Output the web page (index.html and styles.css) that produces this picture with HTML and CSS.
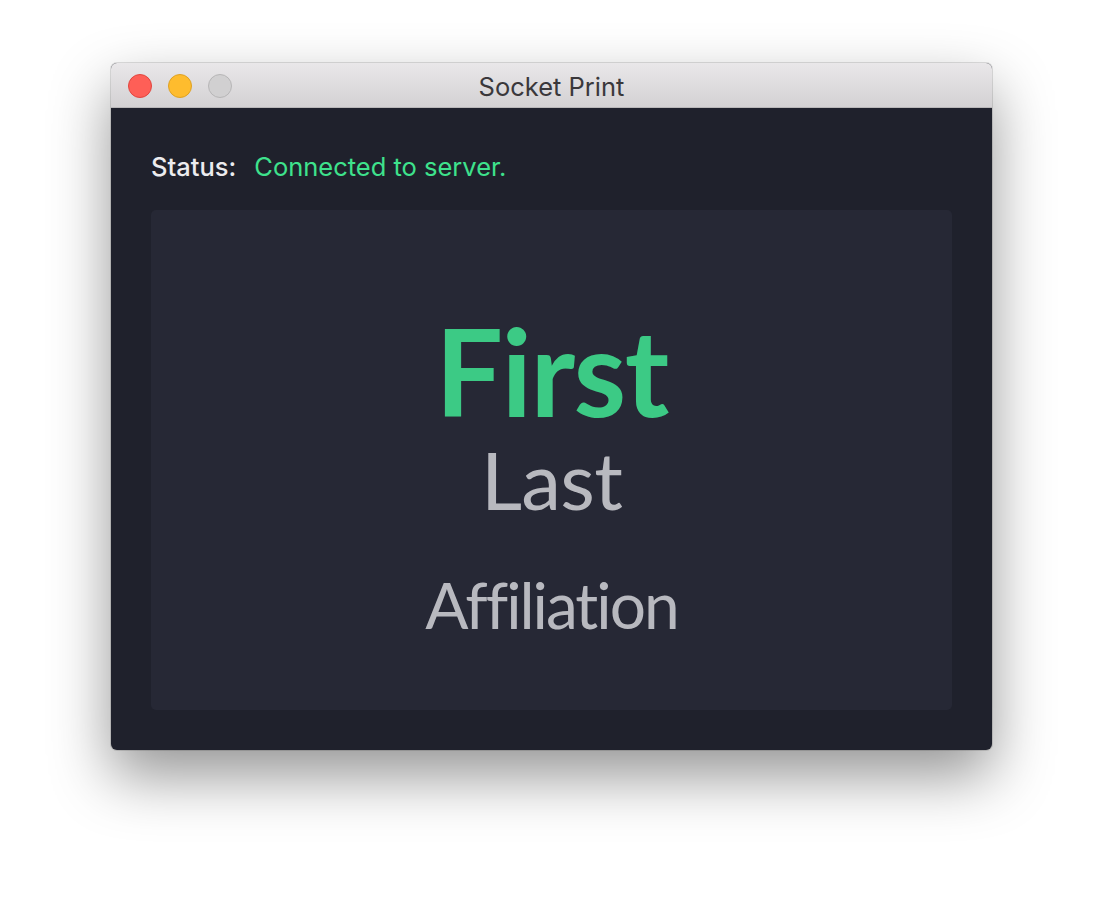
FILE: index.html
```html
<!DOCTYPE html>
<html>
<head>
<meta charset="utf-8">
<link rel="stylesheet" href="styles.css">
</head>
<body>
<div class="stage">
  <div class="window">
    <div class="titlebar">
      <div class="lights">
        <span class="light red"></span>
        <span class="light yellow"></span>
        <span class="light gray"></span>
      </div>
      <div class="title">Socket Print</div>
    </div>
    <div class="content">
      <div class="status">
        <span class="status-label">Status:</span>
        <span class="status-value">Connected to server.</span>
      </div>
      <div class="card">
        <div class="first">First</div>
        <div class="last">Last</div>
        <div class="affiliation">Affiliation</div>
      </div>
    </div>
  </div>
</div>
</body>
</html>
```
FILE: styles.css
```css
html, body {
  margin: 0;
  padding: 0;
  background: #ffffff;
}
.stage {
  padding: 63px 0 0 111px;
  height: 910px;
  box-sizing: border-box;
}
.window {
  width: 881px;
  height: 687px;
  border-radius: 6px;
  overflow: hidden;
  background: #1f212c;
  box-shadow: 0 0 0 1px rgba(0,0,0,0.12), 0 26px 60px rgba(0,0,0,0.42);
  display: flex;
  flex-direction: column;
}
.titlebar {
  height: 44px;
  flex: none;
  background: linear-gradient(#e9e7e9, #d3d1d3);
  border-bottom: 1px solid #b9b7b9;
  position: relative;
  display: flex;
  align-items: center;
  justify-content: center;
}
.lights {
  position: absolute;
  left: 17px;
  top: 11px;
  display: flex;
  gap: 16px;
}
.light {
  width: 22px;
  height: 22px;
  border-radius: 50%;
  border: 1px solid;
}
.red { background: #fe5f57; border-color: #e1463f; }
.yellow { background: #febc2e; border-color: #dea224; }
.gray { background: #d1d0d1; border-color: #b7b6b7; }
.title {
  font-family: Inter, "Liberation Sans", sans-serif;
  font-size: 25.5px;
  color: #3a383b;
  margin-top: 3px;
}
.content {
  flex: 1;
  padding: 44px 40px 40px 40px;
  display: flex;
  flex-direction: column;
}
.status {
  font-family: Inter, "Liberation Sans", sans-serif;
  font-size: 25.5px;
  line-height: 30px;
  height: 30px;
  margin-bottom: 28px;
  display: flex;
  gap: 18px;
}
.status-label { color: #ececef; font-weight: 500; }
.status-value { color: #3ee28c; }
.card {
  flex: 1;
  background: #262835;
  border-radius: 5px;
  padding-top: 101px;
  display: flex;
  flex-direction: column;
  align-items: center;
  font-family: Lato, "Open Sans", sans-serif;
}
.first {
  font-size: 120px;
  line-height: 120px;
  font-weight: 700;
  color: #3cca85;
  letter-spacing: -1.5px;
}
.last {
  font-size: 80px;
  line-height: 80px;
  color: #b8b9bf;
  margin-top: 8px;
  letter-spacing: -0.75px;
}
.affiliation {
  font-size: 64px;
  line-height: 64px;
  color: #b8b9bf;
  margin-top: 54px;
  letter-spacing: -2px;
}
```
